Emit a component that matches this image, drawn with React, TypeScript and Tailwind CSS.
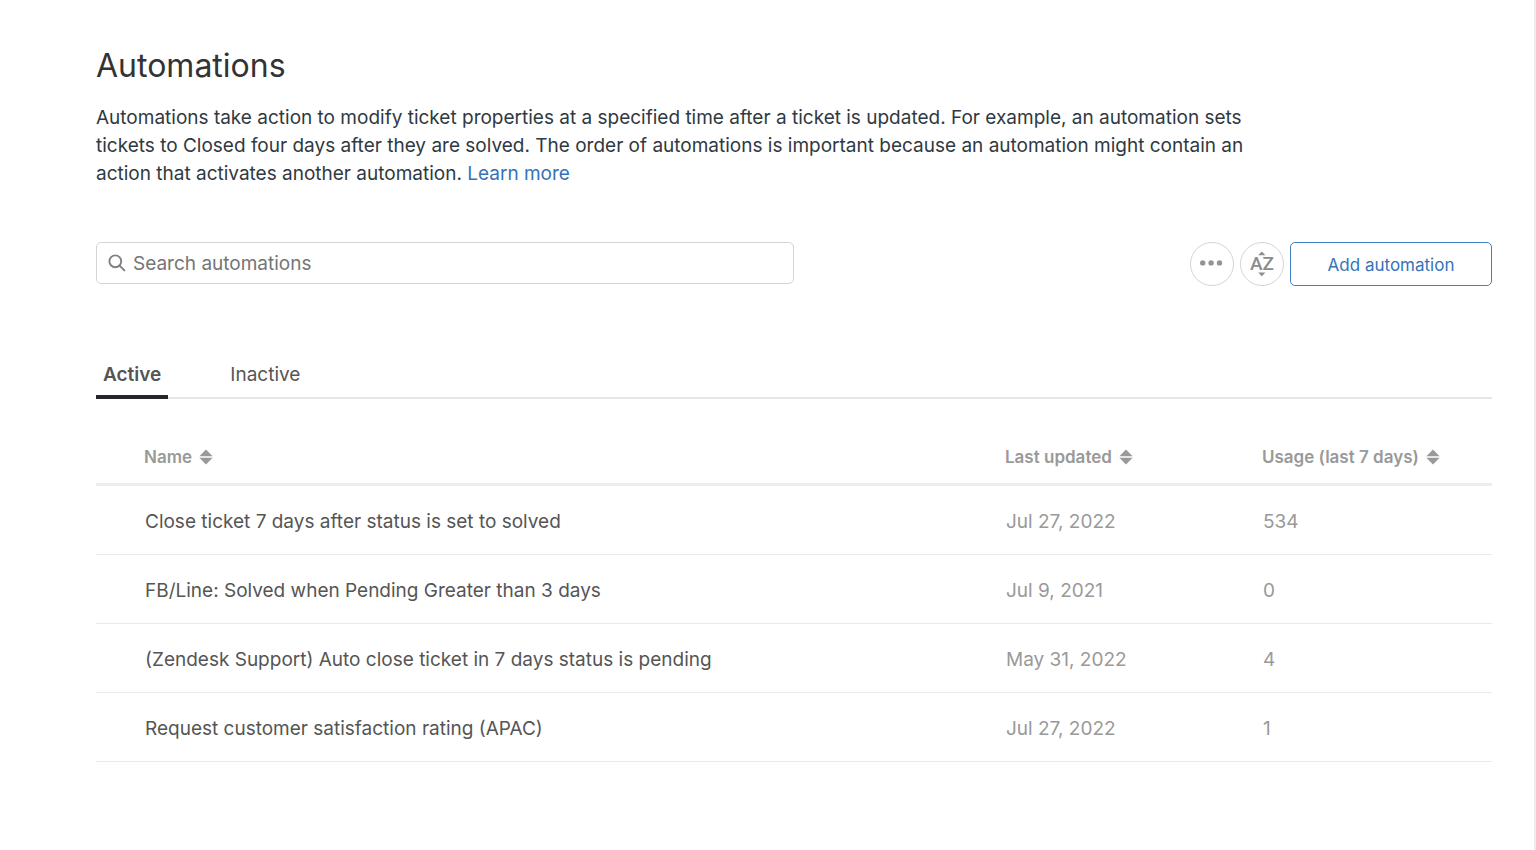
import React, { useState } from "react";

interface Automation {
  name: string;
  updated: string;
  usage: number;
  active: boolean;
}

const automations: Automation[] = [
  {
    name: "Close ticket 7 days after status is set to solved",
    updated: "Jul 27, 2022",
    usage: 534,
    active: true,
  },
  {
    name: "FB/Line: Solved when Pending Greater than 3 days",
    updated: "Jul 9, 2021",
    usage: 0,
    active: true,
  },
  {
    name: "(Zendesk Support) Auto close ticket in 7 days status is pending",
    updated: "May 31, 2022",
    usage: 4,
    active: true,
  },
  {
    name: "Request customer satisfaction rating (APAC)",
    updated: "Jul 27, 2022",
    usage: 1,
    active: true,
  },
];

const SortIcon = () => (
  <svg width="14" height="16" viewBox="0 0 14 16" fill="currentColor" aria-hidden="true">
    <path d="M7 0.5 13.6 7.2H0.4zM7 15.5 0.4 8.8h13.2z" />
  </svg>
);

const SearchIcon = () => (
  <svg
    width="18"
    height="18"
    viewBox="0 0 18 18"
    fill="none"
    stroke="currentColor"
    strokeWidth="1.9"
    aria-hidden="true"
  >
    <circle cx="7.3" cy="7.3" r="5.9" />
    <path d="M11.6 11.6 16.4 16.4" strokeLinecap="round" />
  </svg>
);

const DotsIcon = () => (
  <svg width="24" height="8" viewBox="0 0 24 8" fill="currentColor" aria-hidden="true">
    <circle cx="2.7" cy="2.9" r="2.7" />
    <circle cx="11.1" cy="2.9" r="2.7" />
    <circle cx="19.5" cy="2.9" r="2.7" />
  </svg>
);

// A and Z with a small arrow above and below
const ReorderIcon = () => (
  <svg width="24" height="26" viewBox="0 0 24 26" fill="currentColor" aria-hidden="true">
    <text
      x="12"
      y="19"
      textAnchor="middle"
      className="font-['Roboto',sans-serif] text-[19px] font-medium"
    >
      AZ
    </text>
    <path d="M11.8 0.4 15.4 4.2H8.2zM11.8 25.2 8.2 21.4h7.2z" />
  </svg>
);

const App: React.FC = () => {
  const [activeTab, setActiveTab] = useState<"active" | "inactive">("active");
  const [query, setQuery] = useState("");

  const rows = automations.filter(
    (a) =>
      a.active === (activeTab === "active") &&
      a.name.toLowerCase().includes(query.toLowerCase())
  );

  return (
    <div className="min-h-screen border-r-2 border-[#ededed] bg-white pt-[46px] pr-[42px] pb-16 pl-24 font-['Inter',sans-serif] text-[#555]">
      {/* Header */}
      <h1 className="text-[32px] leading-10 text-[#333]">Automations</h1>
      <p className="mt-[18px] max-w-[1160px] text-[19px] leading-7 text-[#2f3941]">
        Automations take action to modify ticket properties at a specified time
        after a ticket is updated. For example, an automation sets tickets to
        Closed four days after they are solved. The order of automations is
        important because an automation might contain an action that activates
        another automation.{" "}
        <a href="#learn-more" className="text-[#3572b9] hover:underline">
          Learn more
        </a>
      </p>

      {/* Toolbar */}
      <div className="mt-[54px] flex items-start justify-between">
        <label className="flex h-[42px] w-1/2 items-center gap-[7px] rounded-[5px] border border-[#d4d4d4] px-[11px] text-[#808080]">
          <SearchIcon />
          <input
            type="text"
            aria-label="Search automations"
            placeholder="Search automations"
            value={query}
            onChange={(e) => setQuery(e.target.value)}
            className="min-w-0 grow bg-transparent pt-[2px] text-[19px] leading-6 text-[#555] outline-none placeholder:text-[#757575]"
          />
        </label>
        <div className="flex items-center gap-[6px]">
          <button
            aria-label="More options"
            className="flex size-11 items-center justify-center rounded-full border border-[#d4d4d4] text-[#949494]"
          >
            <DotsIcon />
          </button>
          <button
            aria-label="Reorder automations"
            className="flex size-11 items-center justify-center rounded-full border border-[#d4d4d4] text-[#8c8c8c]"
          >
            <ReorderIcon />
          </button>
          <button className="h-11 w-[202px] rounded-[5px] border border-[#3f7fc4] pt-[2px] text-[17px] leading-6 text-[#3572b9]">
            Add automation
          </button>
        </div>
      </div>

      {/* Tabs */}
      <div role="tablist" className="mt-[69px] flex gap-[55px] border-b-2 border-[#e6e6e6] text-[19px] leading-10">
        <button
          role="tab"
          aria-selected={activeTab === "active"}
          onClick={() => setActiveTab("active")}
          className={`-mb-[2px] border-b-4 px-[7px] ${
            activeTab === "active" ? "border-[#26252c] font-semibold" : "border-transparent"
          }`}
        >
          Active
        </button>
        <button
          role="tab"
          aria-selected={activeTab === "inactive"}
          onClick={() => setActiveTab("inactive")}
          className={`-mb-[2px] border-b-4 px-[7px] ${
            activeTab === "inactive" ? "border-[#26252c] font-semibold" : "border-transparent"
          }`}
        >
          Inactive
        </button>
      </div>

      {/* Table */}
      <table className="mt-7 w-full table-fixed border-separate border-spacing-0 text-left">
        <thead>
          <tr className="h-[59px] text-[17px] leading-6 text-[#999]">
            <th className="border-b-[3px] border-[#ededed] pt-1 pl-12 font-semibold">
              <button className="flex items-center gap-[7px]">
                Name <SortIcon />
              </button>
            </th>
            <th className="w-[257px] border-b-[3px] border-[#ededed] pt-1 font-semibold">
              <button className="flex items-center gap-[7px]">
                Last updated <SortIcon />
              </button>
            </th>
            <th className="w-[230px] border-b-[3px] border-[#ededed] pt-1 font-semibold">
              <button className="flex items-center gap-[7px]">
                Usage (last 7 days) <SortIcon />
              </button>
            </th>
          </tr>
        </thead>
        <tbody className="text-[19px] leading-6">
          {rows.map((row) => (
            <tr key={row.name} className="h-[69px]">
              <td className="border-b border-[#e9e9e9] pt-1 pl-[49px]">{row.name}</td>
              <td className="border-b border-[#e9e9e9] pt-1 pl-px text-[#999]">{row.updated}</td>
              <td className="border-b border-[#e9e9e9] pt-1 pl-px text-[#999]">{row.usage}</td>
            </tr>
          ))}
        </tbody>
      </table>
    </div>
  );
};

export default App;
